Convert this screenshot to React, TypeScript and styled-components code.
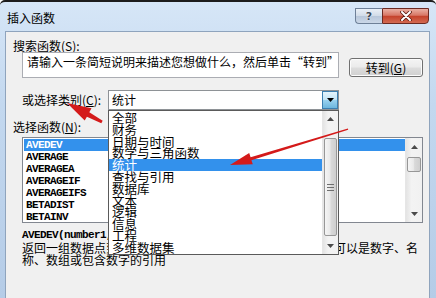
import React from "react";
import styled, { createGlobalStyle } from "styled-components";

const CJK = `"Noto Sans CJK SC", "Noto Sans", sans-serif`;
const MONO = `"Liberation Mono", "DejaVu Sans Mono", monospace`;

const GlobalStyle = createGlobalStyle`
  html, body { margin: 0; padding: 0; background: #ffffff; }
  body { font-family: ${CJK}; }
  * { box-sizing: border-box; }
`;

const Window = styled.div`
  position: relative;
  width: 436px;
  height: 298px;
  overflow: hidden;
  display: flex;
  flex-direction: column;
  border-top: 2px solid #1c1c1c;
  border-radius: 5px 5px 0 0;
  background: linear-gradient(180deg, #d6e6f7 0%, #c3d8ef 35%, #b5cce7 100%);
  font-family: ${CJK};
  color: #000;
`;

const TitleBar = styled.div`
  height: 29px;
  flex: none;
  display: flex;
  align-items: flex-start;
  padding: 0 7px;
`;

const Title = styled.div`
  margin-top: 9px;
  font-size: 12px;
  line-height: 14px;
`;

const CaptionGroup = styled.div`
  margin-left: auto;
  margin-top: 6px;
  display: flex;
`;

const HelpButton = styled.div`
  width: 27px;
  height: 16px;
  border: 1px solid #6e8098;
  border-right: none;
  border-radius: 0 0 0 4px;
  background: linear-gradient(180deg, #eaf0f7 0%, #d2dce8 48%, #b8c7da 52%, #cbd8e8 100%);
  display: flex;
  align-items: center;
  justify-content: center;
  font-family: "DejaVu Sans", sans-serif;
  font-weight: bold;
  font-size: 11px;
  color: #3e4a5a;
  text-shadow: 0 0 1px #fff, 0 0 1px #fff;
`;

const CloseButton = styled.div`
  width: 47px;
  height: 16px;
  border: 1px solid #6b2a22;
  border-radius: 0 0 4px 0;
  background: linear-gradient(180deg, #eab0a3 0%, #d87766 45%, #c5432c 52%, #d36a52 100%);
  display: flex;
  align-items: center;
  justify-content: center;
`;

const Client = styled.div`
  position: relative;
  flex: 1;
  margin: 0 6px 0 5px;
  background: #f0f0f0;
  border: 1px solid #8fa4bd;
  border-bottom: none;
  padding: 0 6px 0 7px;
  display: flex;
  flex-direction: column;
  align-items: flex-start;
`;

const FieldLabel = styled.div<{ $top: number }>`
  margin-top: ${(p) => p.$top}px;
  font-size: 12px;
  line-height: 12px;
  white-space: nowrap;
`;

const Key = styled.span`
  text-decoration: underline;
`;

const Indented = styled.div<{ $top: number }>`
  margin-top: ${(p) => p.$top}px;
  margin-left: 9px;
  display: flex;
`;

const SearchRow = styled(Indented)`
  align-items: flex-start;
  gap: 10px;
`;

const SearchBox = styled.div`
  width: 317px;
  height: 26px;
  background: #fff;
  border: 1px solid #abadb3;
  padding: 2px 0 0 4px;
  font-size: 12px;
  line-height: 14px;
  white-space: nowrap;
  overflow: hidden;
`;

const PushButton = styled.div`
  margin-top: 6px;
  width: 74px;
  height: 19px;
  border: 1px solid #707070;
  border-radius: 3px;
  background: linear-gradient(180deg, #f4f4f4 0%, #ebebeb 48%, #dddddd 52%, #d0d0d0 100%);
  box-shadow: inset 0 0 0 1px #fcfcfc;
  display: flex;
  align-items: center;
  justify-content: center;
  font-size: 12px;
  line-height: 12px;
`;

const CategoryRow = styled(Indented)`
  align-items: center;
  height: 20px;
`;

const CategoryLabel = styled.div`
  width: 86px;
  font-size: 12px;
  line-height: 12px;
  white-space: nowrap;
`;

const Combo = styled.div`
  width: 231px;
  height: 20px;
  background: #fff;
  border: 1px solid #8e9296;
  display: flex;
`;

const ComboText = styled.div`
  flex: 1;
  padding-left: 3px;
  font-size: 12px;
  line-height: 18px;
`;

const ComboButton = styled.div`
  width: 16px;
  height: 18px;
  border: 1px solid #3c7fb1;
  background: linear-gradient(180deg, #e5f4fc 0%, #c4e5f6 48%, #98d1ef 52%, #6cb6de 100%);
  display: flex;
  align-items: center;
  justify-content: center;
`;

const ListBox = styled(Indented)`
  width: 401px;
  height: 86px;
  background: #fff;
  border: 1px solid #828790;
`;

const ListItems = styled.div`
  flex: 1;
  padding: 1px 0 0 1px;
  overflow: hidden;
`;

const FuncItem = styled.div<{ $selected?: boolean }>`
  height: 12px;
  line-height: 12px;
  padding-left: 2px;
  font-family: ${MONO};
  font-weight: bold;
  font-size: 11px;
  letter-spacing: -0.6px;
  background: ${(p) => (p.$selected ? "#3391ec" : "transparent")};
  color: ${(p) => (p.$selected ? "#fff" : "#000")};
`;

const Syntax = styled.div`
  margin-top: 6px;
  margin-left: 9px;
  height: 12px;
  line-height: 12px;
  font-family: ${MONO};
  font-weight: bold;
  font-size: 11px;
  letter-spacing: -0.6px;
  white-space: nowrap;
`;

const Description = styled.div`
  margin-top: 1px;
  margin-left: 9px;
  width: 401px;
  font-size: 12px;
  line-height: 12px;
`;

const DropList = styled.div`
  position: absolute;
  left: 102px;
  top: 78px;
  width: 231px;
  height: 145px;
  background: #fff;
  border: 1px solid #5a5a5a;
  display: flex;
  z-index: 5;
`;

const DropItems = styled.div`
  flex: 1;
  padding-top: 1px;
  overflow: hidden;
`;

const DropItem = styled.div<{ $selected?: boolean }>`
  height: 11.8px;
  line-height: 11.8px;
  padding-left: 3px;
  font-size: 12.5px;
  white-space: nowrap;
  background: ${(p) => (p.$selected ? "#3391ec" : "transparent")};
  color: ${(p) => (p.$selected ? "#fff" : "#000")};
`;

const ScrollBar = styled.div<{ $w: number }>`
  width: ${(p) => p.$w}px;
  flex: none;
  display: flex;
  flex-direction: column;
  background: linear-gradient(90deg, #e4e4e4 0%, #f3f3f3 35%, #f1f1f1 100%);
  border-left: 1px solid #e6e6e6;
`;

const ScrollArrow = styled.div<{ $h: number }>`
  height: ${(p) => p.$h}px;
  flex: none;
  display: flex;
  align-items: center;
  justify-content: center;
`;

const ScrollMiddle = styled.div`
  flex: 1;
  padding: 0 1px;
`;

const Thumb = styled.div<{ $offset: number; $h: number }>`
  margin-top: ${(p) => p.$offset}px;
  height: ${(p) => p.$h}px;
  border: 1px solid #979797;
  border-radius: 2px;
  background: linear-gradient(90deg, #f5f5f5 0%, #e9e9e9 45%, #d9d9d9 55%, #cfcfcf 100%);
  display: flex;
  align-items: center;
  justify-content: center;
`;

const Overlay = styled.svg`
  position: absolute;
  left: 0;
  top: -2px;
  pointer-events: none;
  z-index: 10;
`;

const Caret = ({ down }: { down?: boolean }) => (
  <svg width="7" height="4" viewBox="0 0 7 4">
    <polygon points={down ? "0,0 7,0 3.5,4" : "0,4 3.5,0 7,4"} fill="#4a4a4a" />
  </svg>
);

const Grip = () => (
  <svg width="7" height="7" viewBox="0 0 7 7">
    <rect x="0" y="0" width="7" height="1" fill="#6f6f6f" />
    <rect x="0" y="3" width="7" height="1" fill="#6f6f6f" />
    <rect x="0" y="6" width="7" height="1" fill="#6f6f6f" />
  </svg>
);

type SBProps = { w: number; arrow: number; offset: number; thumb: number; grip?: boolean };
const Scroller = ({ w, arrow, offset, thumb, grip }: SBProps) => (
  <ScrollBar $w={w}>
    <ScrollArrow $h={arrow}>
      <Caret />
    </ScrollArrow>
    <ScrollMiddle>
      <Thumb $offset={offset} $h={thumb}>
        {grip && <Grip />}
      </Thumb>
    </ScrollMiddle>
    <ScrollArrow $h={arrow}>
      <Caret down />
    </ScrollArrow>
  </ScrollBar>
);

const functions = ["AVEDEV", "AVERAGE", "AVERAGEA", "AVERAGEIF", "AVERAGEIFS", "BETADIST", "BETAINV"];
const categories = [
  "全部",
  "财务",
  "日期与时间",
  "数学与三角函数",
  "统计",
  "查找与引用",
  "数据库",
  "文本",
  "逻辑",
  "信息",
  "工程",
  "多维数据集",
];

export default function App() {
  return (
    <>
      <GlobalStyle />
      <Window>
        <TitleBar>
          <Title>插入函数</Title>
          <CaptionGroup>
            <HelpButton>?</HelpButton>
            <CloseButton>
              <svg width="12" height="10" viewBox="0 0 12 10">
                <path d="M2 1 L10 9 M10 1 L2 9" stroke="#5a1a12" strokeWidth="3.6" strokeLinecap="round" />
                <path d="M2 1 L10 9 M10 1 L2 9" stroke="#ffffff" strokeWidth="2" strokeLinecap="round" />
              </svg>
            </CloseButton>
          </CaptionGroup>
        </TitleBar>
        <Client>
          <FieldLabel $top={8}>
            搜索函数(<Key>S</Key>):
          </FieldLabel>
          <SearchRow $top={0}>
            <SearchBox>请输入一条简短说明来描述您想做什么，然后单击“转到”</SearchBox>
            <PushButton>
              转到(<Key>G</Key>)
            </PushButton>
          </SearchRow>
          <CategoryRow $top={12}>
            <CategoryLabel>
              或选择类别(<Key>C</Key>):
            </CategoryLabel>
            <Combo>
              <ComboText>统计</ComboText>
              <ComboButton>
                <svg width="7" height="4" viewBox="0 0 7 4">
                  <polygon points="0,0 7,0 3.5,4" fill="#000" />
                </svg>
              </ComboButton>
            </Combo>
          </CategoryRow>
          <FieldLabel $top={11}>
            选择函数(<Key>N</Key>):
          </FieldLabel>
          <ListBox $top={4}>
            <ListItems>
              {functions.map((f, i) => (
                <FuncItem key={f} $selected={i === 0}>
                  {f}
                </FuncItem>
              ))}
            </ListItems>
            <Scroller w={17} arrow={17} offset={2} thumb={15} />
          </ListBox>
          <Syntax>AVEDEV(number1,number2,...)</Syntax>
          <Description>
            返回一组数据点到其算术平均值的绝对偏差的平均值。参数可以是数字、名称、数组或包含数字的引用
          </Description>
          <DropList>
            <DropItems>
              {categories.map((c) => (
                <DropItem key={c} $selected={c === "统计"}>
                  {c}
                </DropItem>
              ))}
            </DropItems>
            <Scroller w={16} arrow={16} offset={11} thumb={98} grip />
          </DropList>
        </Client>
        <Overlay width="436" height="298" viewBox="0 0 436 298">
          <polygon
            points="230,165 249.2,152.9 250.6,157.2 347.9,128.4 348.2,129.8 251.4,160.2 252.8,164.3"
            fill="#d41a1a"
          />
          <polygon
            points="67,103 91.5,108.3 89.3,112.3 102.7,120.7 101.3,123.3 86.9,116.7 84.7,120.6"
            fill="#d41a1a"
          />
        </Overlay>
      </Window>
    </>
  );
}
